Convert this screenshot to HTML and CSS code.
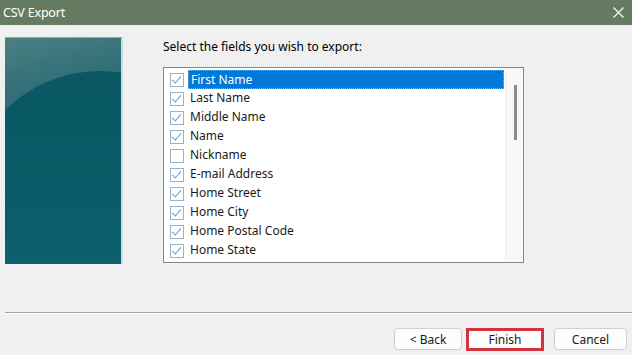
FILE: index.html
```html
<!DOCTYPE html>
<html lang="en">
<head>
  <meta charset="UTF-8" />
  <title>CSV Export</title>
  <link rel="stylesheet" href="styles.css">
</head>
<body>
  <div class="titlebar">
    <span class="title">CSV Export</span>
    <svg class="close" width="11" height="11" viewBox="0 0 11 11">
      <path d="M0.5 0.5 L10.5 10.5 M10.5 0.5 L0.5 10.5" stroke="#fff" stroke-width="1.1" fill="none"/>
    </svg>
  </div>

  <div class="main">
    <!-- wizard picture -->
    <div class="side-pic"></div>

    <div class="fields">
      <p class="prompt">Select the fields you wish to export:</p>
      <div class="listbox">
        <ul class="items">
          <li class="selected"><span class="chk on"></span><span class="lbl">First Name</span></li>
          <li><span class="chk on"></span><span class="lbl">Last Name</span></li>
          <li><span class="chk on"></span><span class="lbl">Middle Name</span></li>
          <li><span class="chk on"></span><span class="lbl">Name</span></li>
          <li><span class="chk"></span><span class="lbl">Nickname</span></li>
          <li><span class="chk on"></span><span class="lbl">E-mail Address</span></li>
          <li><span class="chk on"></span><span class="lbl">Home Street</span></li>
          <li><span class="chk on"></span><span class="lbl">Home City</span></li>
          <li><span class="chk on"></span><span class="lbl">Home Postal Code</span></li>
          <li><span class="chk on"></span><span class="lbl">Home State</span></li>
        </ul>
        <div class="scrollbar"><div class="thumb"></div></div>
      </div>
    </div>
  </div>

  <div class="separator"></div>

  <div class="buttons">
    <button class="btn">&lt; Back</button>
    <button class="btn finish">Finish</button>
    <button class="btn cancel">Cancel</button>
  </div>
</body>
</html>
```

FILE: styles.css
```css
body {
  margin: 0;
  background: #f0f0f0;
  font-family: "Noto Sans", "Open Sans", sans-serif;
  font-size: 12px;
  color: #000;
  width: 632px;
  height: 355px;
  overflow: hidden;
}
.titlebar {
  height: 25px;
  background: #657c62;
  display: flex;
  align-items: center;
  justify-content: space-between;
  padding: 0 8px 0 3px;
}
.title {
  color: #fff;
  font-size: 12.5px;
  letter-spacing: -0.2px;
}
.close {
  margin-top: -1px;
}
.main {
  display: flex;
  padding: 12px 0 0 5px;
}
.side-pic {
  width: 116px;
  height: 226px;
  border-top: 1px solid #8fa7ad;
  border-right: 2px solid #c9dbe3;
  background: linear-gradient(180deg, #0c5d68 0%, #0d5f6b 60%, #11687a 100%);
  position: relative;
  overflow: hidden;
}
.side-pic::before {
  content: "";
  position: absolute;
  left: 0;
  top: 0;
  right: 0;
  height: 80px;
  background: linear-gradient(165deg, #4b8081 0%, #35717a 45%, #1f6670 100%);
}
.side-pic::after {
  content: "";
  position: absolute;
  left: -40px;
  top: 33px;
  width: 270px;
  height: 270px;
  border-radius: 50%;
  background: linear-gradient(180deg, #095863 0%, #0a5c68 50%, #0f6575 100%);
}
.fields {
  margin-left: 40px;
}
.prompt {
  margin: 2px 0 12px 0;
  line-height: 16px;
}
.listbox {
  width: 359px;
  height: 194px;
  border: 1px solid #828790;
  background: #fff;
  display: flex;
}
.items {
  list-style: none;
  margin: 0;
  padding: 2px 0 0 0;
  flex: 1;
}
.items li {
  display: flex;
  align-items: center;
  height: 19px;
  padding-left: 6px;
}
.chk {
  width: 12px;
  height: 12px;
  border: 1px solid #9db0c4;
  background: #fff;
  position: relative;
  flex-shrink: 0;
}
.chk.on::after {
  content: "";
  position: absolute;
  left: 3px;
  top: 0px;
  width: 4px;
  height: 8px;
  border: solid #58a0d6;
  border-width: 0 1.6px 1.6px 0;
  transform: rotate(40deg);
}
.lbl {
  margin-left: 4px;
  padding: 0 2px;
  height: 19px;
  line-height: 18px;
  box-sizing: border-box;
  color: #1a1a1a;
}
.selected .lbl {
  background: #0078d7;
  color: #fff;
  flex: 1;
  margin-right: 1px;
  border: 1px dotted #7fb5e8;
}
.scrollbar {
  width: 17px;
  background: #f7f7f7;
  border-left: 1px solid #f0f0f0;
  padding-top: 17px;
  display: flex;
  justify-content: center;
}
.thumb {
  width: 3px;
  height: 55px;
  background: #8b8b8b;
  margin-left: 1px;
}
.separator {
  margin: 48px 0 0 5px;
  height: 1px;
  background: #a0a0a0;
  border-bottom: 1px solid #fff;
}
.buttons {
  display: flex;
  justify-content: flex-end;
  padding: 14px 5px 0 0;
}
.btn {
  font-family: "Noto Sans", "Open Sans", sans-serif;
  font-size: 12px;
  height: 22px;
  padding: 0;
  background: #fdfdfd;
  border: 1px solid #d0d0d0;
  border-radius: 4px;
  color: #1a1a1a;
}
.btn:first-child {
  width: 68px;
}
.finish {
  width: 78px;
  margin-left: 4px;
  border: 3px solid #d4333e;
  border-radius: 0;
  height: 23px;
}
.cancel {
  width: 73px;
  margin-left: 10px;
}
```
